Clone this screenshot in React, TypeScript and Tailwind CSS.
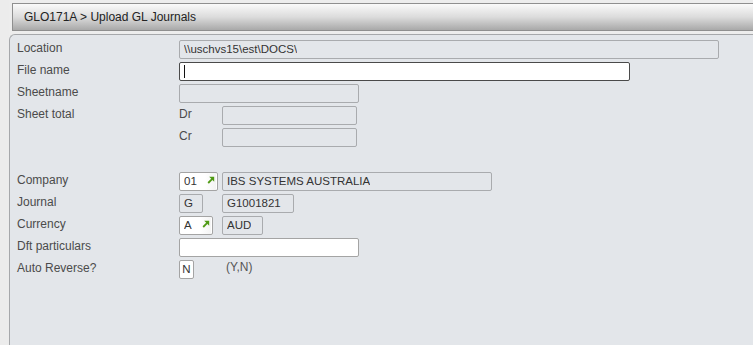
import React from "react";

const font = { fontFamily: '"Liberation Sans", Arial, sans-serif' };

function LinkArrow() {
  return (
    <span className="ml-auto flex h-full w-[11px] items-start justify-center bg-gradient-to-r from-white to-[#f4f4f4] pt-[3px]">
      <svg width="8" height="8" viewBox="0 0 8 8">
        <path d="M1.2 7 L5.5 2.7" stroke="#4f9a14" strokeWidth="1.8" />
        <path d="M2.2 0.8 H7.2 V5.8 Z" fill="#4f9a14" />
      </svg>
    </span>
  );
}

function Field({
  w,
  value = "",
  editable = false,
  dark = false,
  arrow = false,
  caret = false,
  pad = "px-[4px]",
}: {
  w: string;
  value?: string;
  editable?: boolean;
  dark?: boolean;
  arrow?: boolean;
  caret?: boolean;
  pad?: string;
}) {
  const base = "flex h-[19px] items-center rounded-[2px] border text-[11.5px] text-[#333]";
  const tone = editable
    ? dark
      ? "bg-white border-[#4a4a4a]"
      : "bg-white border-[#a4a4a4]"
    : "bg-[#e3e6ea] border-[#a9abae]";
  return (
    <div className={`${base} ${tone} ${w} ${arrow ? "pl-[4px] pr-[1px]" : pad}`}>
      {caret && <span className="h-[13px] w-px bg-[#111]" />}
      {value && <span className="truncate leading-none">{value}</span>}
      {arrow && <LinkArrow />}
    </div>
  );
}

function Row({ label, children }: { label?: string; children?: React.ReactNode }) {
  return (
    <div className="flex h-[22px] items-start">
      <div className="w-[162px] pt-[1px] text-[12px] leading-[14px] text-[#4b4b4b]">{label}</div>
      <div className="flex items-start gap-[4px]">{children}</div>
    </div>
  );
}

export default function App() {
  return (
    <div style={font} className="h-[345px] w-[753px] overflow-hidden bg-[#ededed]">
      <div className="flex h-full">
        <div className="w-[9px] shrink-0 bg-[#ececec]" />
        <div className="flex min-w-0 flex-1 flex-col">
          <div className="ml-[3px] mt-[3px] flex h-[28px] items-center border border-r-0 border-[#8f8f8f] bg-gradient-to-b from-[#fafafa] via-[#dcdcdc] to-[#a9a9a9] pb-[1px] pl-[11px] text-[12px] text-[#222]">
            GLO171A &gt; Upload GL Journals
          </div>
          <div className="mt-[3px] flex-1 rounded-tl-[6px] border-l border-t border-[#a6a8ab] bg-[#e3e6ea] pl-[7px] pt-[5px]">
            <Row label="Location">
              <Field w="w-[540px]" value="\\uschvs15\est\DOCS\" />
            </Row>
            <Row label="File name">
              <Field w="w-[451px]" editable dark caret />
            </Row>
            <Row label="Sheetname">
              <Field w="w-[180px]" />
            </Row>
            <Row label="Sheet total">
              <div className="w-[39px] pt-[1px] text-[12px] leading-[14px] text-[#4b4b4b]">Dr</div>
              <Field w="w-[135px]" />
            </Row>
            <Row>
              <div className="w-[39px] pt-[1px] text-[12px] leading-[14px] text-[#4b4b4b]">Cr</div>
              <Field w="w-[135px]" />
            </Row>
            <Row />
            <Row label="Company">
              <Field w="w-[39px]" value="01" editable arrow />
              <Field w="w-[270px]" value="IBS SYSTEMS AUSTRALIA" />
            </Row>
            <Row label="Journal">
              <Field w="w-[24px]" value="G" />
              <div className="w-[11px]" />
              <Field w="w-[72px]" value="G1001821" />
            </Row>
            <Row label="Currency">
              <Field w="w-[34px]" value="A" editable arrow />
              <div className="w-[1px]" />
              <Field w="w-[41px]" value="AUD" />
            </Row>
            <Row label="Dft particulars">
              <Field w="w-[180px]" editable />
            </Row>
            <Row label="Auto Reverse?">
              <Field w="w-[15px]" value="N" editable pad="justify-center px-0" />
              <div className="w-[24px]" />
              <div className="text-[12px] leading-[14px] text-[#555]">(Y,N)</div>
            </Row>
          </div>
        </div>
      </div>
    </div>
  );
}
